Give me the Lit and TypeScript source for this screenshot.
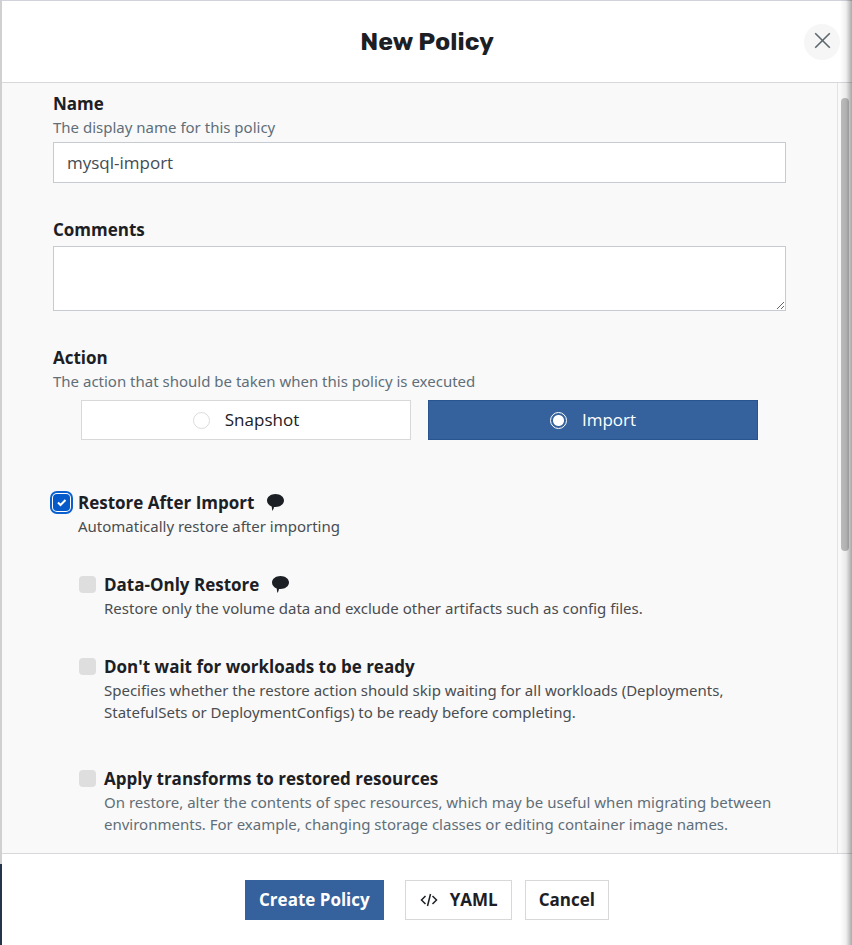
import { LitElement, html, css, svg } from "lit";
import { customElement, property, state } from "lit/decorators.js";
import { classMap } from "lit/directives/class-map.js";

const bubbleIcon = svg`<path d="M8.500 0C3.800 0 0 2.900 0 6.500c0 2.600 1.900 4.900 4.700 5.900L5.300 17c.9-1.200 1.500-2.500 1.700-4.100.5.100 1 .1 1.500.1 4.700 0 8.500-2.900 8.500-6.500S13.200 0 8.500 0z" fill="currentColor"/>`;

@customElement("check-option")
export class CheckOption extends LitElement {
  @property() heading = "";
  @property() description = "";
  @property() name = "";
  @property({ type: Boolean }) checked = false;
  @property({ type: Boolean }) ringed = false;
  @property({ type: Boolean }) note = false;
  @property({ type: Boolean }) muted = false;

  static styles = css`
    :host {
      display: block;
      color: #1c2024;
    }
    .row {
      display: grid;
      grid-template-columns: 17px 1fr;
      column-gap: 8px;
    }
    .box {
      appearance: none;
      box-sizing: border-box;
      width: 17px;
      height: 17px;
      margin: 3px 0 0;
      border-radius: 4px;
      background: #dedede;
      outline: none;
    }
    .stack {
      display: grid;
      align-items: start;
    }
    .stack > * {
      grid-area: 1 / 1;
    }
    .box:checked {
      background: #0559c9;
    }
    .ring {
      box-shadow: 0 0 0 1px #fff, 0 0 0 3px #0b5fce;
    }
    .tick {
      width: 17px;
      height: 17px;
      margin-top: 3px;
      pointer-events: none;
    }
    .title {
      display: flex;
      gap: 13px;
      font-size: 17px;
      font-weight: 700;
      line-height: 24px;
    }
    .bubble {
      width: 17px;
      height: 17px;
      margin-top: 3px;
    }
    .text {
      grid-column: 2;
      margin: 0 0 1px;
      font-family: "Noto Sans", "Open Sans", sans-serif;
      font-size: 15px;
      line-height: 22px;
      color: #4a4d50;
    }
    .muted {
      color: #5f6e78;
    }
  `;

  render() {
    return html`
      <div class="row">
        <span class="stack">
          <input
            type="checkbox"
            id="box"
            name=${this.name}
            class=${classMap({ box: true, ring: this.ringed })}
            .checked=${this.checked}
            @change=${(e: Event) => (this.checked = (e.target as HTMLInputElement).checked)}
          />
          ${this.checked
            ? html`<svg class="tick" viewBox="0 0 17 17" aria-hidden="true">
                <path d="M5 8.500l2.500 2.500L12.500 6" fill="none" stroke="#fff" stroke-width="2" />
              </svg>`
            : ""}
        </span>
        <span class="title">
          <label for="box">${this.heading}</label>
          ${this.note
            ? html`<svg class="bubble" viewBox="0 0 17 17" aria-hidden="true">${bubbleIcon}</svg>`
            : ""}
        </span>
        <p class=${classMap({ text: true, muted: this.muted })}>${this.description}</p>
      </div>
    `;
  }
}

@customElement("app-root")
export class AppRoot extends LitElement {
  @state() private action = "import";

  static styles = css`
    :host {
      display: flex;
      height: 100vh;
      font-family: "Open Sans", "Noto Sans", sans-serif;
      color: #1c2024;
      background: #fff;
      position: relative;
    }
    .backdrop {
      flex: none;
      width: 2px;
      display: flex;
      flex-direction: column;
      background: #d0d0d1;
    }
    .backdrop-foot {
      margin-top: auto;
      height: 81px;
      background: #25344a;
    }
    .edge {
      position: absolute;
      inset: 0 0 0 auto;
      width: 12px;
      pointer-events: none;
      background: linear-gradient(to right, #0000, #00000010 50%, #00000055);
    }
    .dialog {
      flex: 1;
      min-width: 0;
      display: flex;
      flex-direction: column;
    }
    header {
      flex: none;
      box-sizing: border-box;
      height: 83px;
      display: grid;
      grid-template-columns: 1fr auto 1fr;
      align-items: center;
      padding: 0 12px;
      border-top: 1px solid #d0d4da;
      border-bottom: 1px solid #d6d8db;
    }
    h1 {
      grid-column: 2;
      margin: 0;
      font-family: Rubik, Inter, sans-serif;
      font-size: 25px;
      line-height: 32px;
      font-weight: 700;
    }
    .close {
      justify-self: end;
      width: 36px;
      height: 36px;
      padding: 0;
      border: 0;
      border-radius: 50%;
      background: #f6f6f6;
      color: #5d686e;
      display: grid;
      place-items: center;
    }
    .close svg {
      width: 36px;
      height: 36px;
    }
    .body {
      flex: 1;
      min-height: 0;
      display: flex;
      background: #f9f9f9;
    }
    form {
      flex: 1;
      min-width: 0;
      padding: 9px 51px 0;
      overflow: auto;
      scrollbar-width: none;
    }
    .track {
      flex: none;
      box-sizing: border-box;
      width: 15px;
      padding: 15px 3px 0;
      border-left: 1px solid #e3e3e3;
    }
    .thumb {
      height: 60%;
      width: 8px;
      border-radius: 4px;
      background: #bdbdbd;
    }
    .field {
      display: flex;
      flex-direction: column;
      margin: 0 0 35px;
      padding: 0;
      border: 0;
      min-width: 0;
    }
    .label {
      padding: 0;
      font-size: 17px;
      line-height: 24px;
      font-weight: 700;
    }
    .hint {
      margin: 0 0 4px;
      font-family: "Noto Sans", "Open Sans", sans-serif;
      font-size: 15px;
      line-height: 22px;
      color: #5f6e78;
    }
    .control {
      box-sizing: border-box;
      width: 100%;
      border: 1px solid #c5cbd1;
      border-radius: 0;
      background: #fff;
      padding: 0 13px;
      font: 17px/24px "Open Sans", "Noto Sans", sans-serif;
      color: #444b52;
      outline: none;
    }
    input.control {
      height: 41px;
    }
    textarea.control {
      height: 65px;
      margin-top: 4px;
      resize: vertical;
    }
    .choices {
      display: grid;
      grid-template-columns: 1fr 1fr;
      gap: 17px;
      padding: 4px 28px 16px;
    }
    .choice {
      box-sizing: border-box;
      height: 40px;
      display: flex;
      align-items: center;
      justify-content: center;
      gap: 15px;
      border: 1px solid #d8d8d8;
      background: #fff;
      font-size: 17px;
      line-height: 24px;
    }
    .choice.on {
      border-color: #2a5490;
      background: #35619c;
      color: #fff;
    }
    .radio {
      appearance: none;
      box-sizing: border-box;
      width: 17px;
      height: 17px;
      margin: 0;
      border: 1px solid #dcdcdc;
      border-radius: 50%;
      background: #fff;
    }
    .radio:checked {
      border-color: #fff;
      background: radial-gradient(circle, #fff 5px, #35619c 6px);
    }
    .options {
      display: flex;
      flex-direction: column;
      gap: 35px;
    }
    .nested {
      display: flex;
      flex-direction: column;
      gap: 35px;
      padding-left: 26px;
    }
    .spaced {
      margin-top: 8px;
    }
    footer {
      flex: none;
      display: flex;
      justify-content: center;
      padding: 26px 0 25px;
      border-top: 1px solid #d6d8db;
      background: #fff;
    }
    .btn {
      box-sizing: border-box;
      height: 40px;
      display: flex;
      align-items: center;
      gap: 11px;
      margin: 0;
      padding: 0 13px;
      border: 1px solid #d8d8d8;
      background: #fff;
      color: #1c2024;
      font: 700 17px/24px "Open Sans", "Noto Sans", sans-serif;
    }
    .btn + .btn {
      margin-left: 13px;
    }
    .btn.primary {
      border-color: #35619c;
      background: #35619c;
      color: #fff;
      margin-right: 8px;
    }
    .btn svg {
      width: 20px;
      height: 14px;
    }
  `;

  private choice(value: string, text: string) {
    const on = this.action === value;
    return html`<label class=${classMap({ choice: true, on })}>
      <input
        class="radio"
        type="radio"
        name="action"
        value=${value}
        .checked=${on}
        @change=${() => (this.action = value)}
      />
      <span>${text}</span>
    </label>`;
  }

  render() {
    return html`
      <div class="backdrop"><div class="backdrop-foot"></div></div>
      <div class="dialog" role="dialog" aria-labelledby="title">
        <header>
          <h1 id="title">New Policy</h1>
          <button class="close" type="button" aria-label="Close">
            <svg viewBox="0 0 36 36" fill="none" stroke="currentColor" stroke-width="1.600" aria-hidden="true">
              <path d="M11.200 9.200l14.600 14.600M25.800 9.200L11.200 23.800" />
            </svg>
          </button>
        </header>
        <div class="body">
          <form id="policy">
            <div class="field">
              <label class="label" for="name">Name</label>
              <p class="hint">The display name for this policy</p>
              <input class="control" id="name" type="text" value="mysql-import" />
            </div>
            <div class="field">
              <label class="label" for="comments">Comments</label>
              <textarea class="control" id="comments"></textarea>
            </div>
            <fieldset class="field">
              <legend class="label">Action</legend>
              <p class="hint">The action that should be taken when this policy is executed</p>
              <div class="choices">
                ${this.choice("snapshot", "Snapshot")} ${this.choice("import", "Import")}
              </div>
            </fieldset>
            <div class="options">
              <check-option
                name="restore"
                heading="Restore After Import"
                description="Automatically restore after importing"
                checked
                ringed
                note
              ></check-option>
              <div class="nested">
                <check-option
                  name="data-only"
                  heading="Data-Only Restore"
                  description="Restore only the volume data and exclude other artifacts such as config files."
                  note
                ></check-option>
                <check-option
                  name="skip-wait"
                  heading="Don't wait for workloads to be ready"
                  description="Specifies whether the restore action should skip waiting for all workloads (Deployments, StatefulSets or DeploymentConfigs) to be ready before completing."
                ></check-option>
                <check-option
                  class="spaced"
                  name="transforms"
                  heading="Apply transforms to restored resources"
                  description="On restore, alter the contents of spec resources, which may be useful when migrating between environments. For example, changing storage classes or editing container image names."
                  muted
                ></check-option>
              </div>
            </div>
          </form>
          <div class="track"><div class="thumb"></div></div>
        </div>
        <footer>
          <button class="btn primary" type="submit" form="policy">Create Policy</button>
          <button class="btn" type="button">
            <svg viewBox="0 0 20 14" fill="none" stroke="currentColor" stroke-width="1.500" aria-hidden="true">
              <path d="M6.500 3L2.500 7l4 4M13.500 3l4 4-4 4M11.500 1l-3 12" />
            </svg>
            YAML
          </button>
          <button class="btn" type="button">Cancel</button>
        </footer>
      </div>
      <div class="edge"></div>
    `;
  }
}
